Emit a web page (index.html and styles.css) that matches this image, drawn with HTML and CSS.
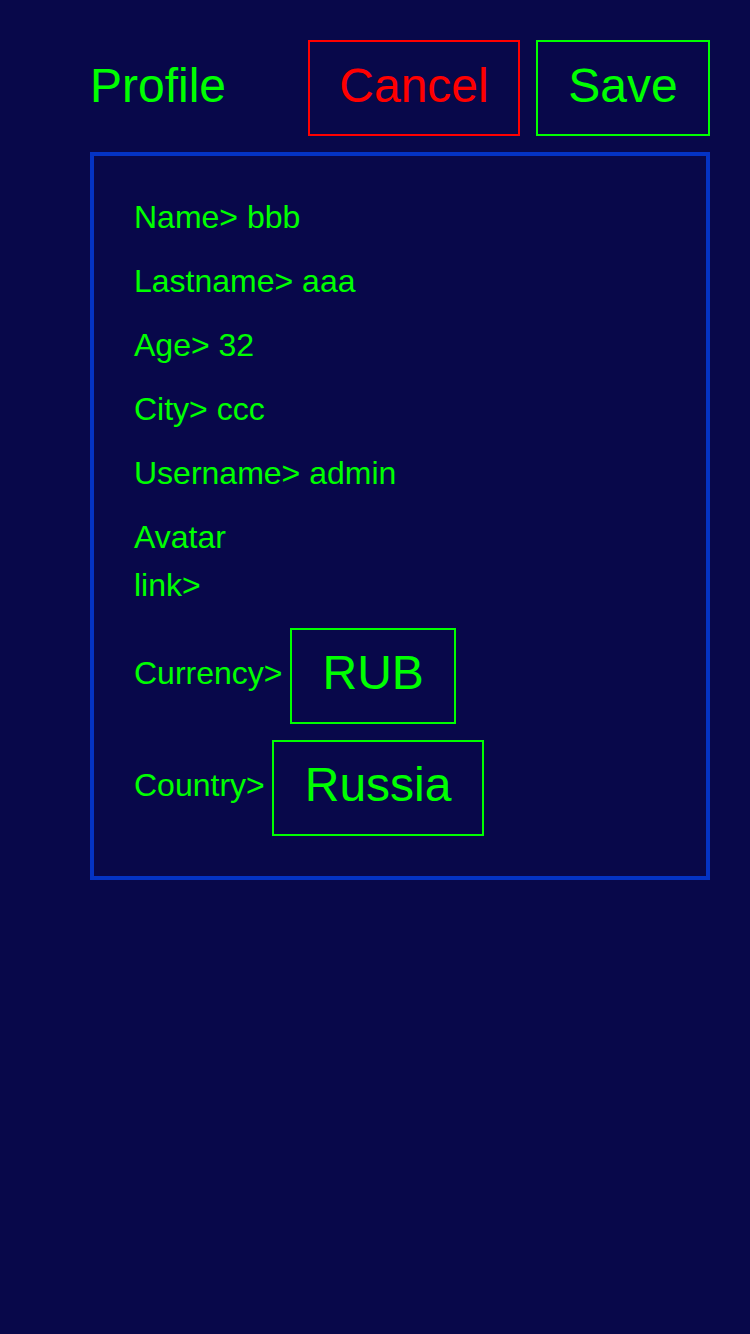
FILE: index.html
```html
<!DOCTYPE html>
<html>
<head>
<meta charset="utf-8">
<link rel="stylesheet" href="styles.css">
</head>
<body>
<div class="page">
  <header class="header">
    <div class="title">Profile</div>
    <div class="actions">
      <div class="btn btn-cancel">Cancel</div>
      <div class="btn btn-save">Save</div>
    </div>
  </header>
  <section class="card">
    <div class="row">Name&gt; bbb</div>
    <div class="row">Lastname&gt; aaa</div>
    <div class="row">Age&gt; 32</div>
    <div class="row">City&gt; ccc</div>
    <div class="row">Username&gt; admin</div>
    <div class="row row-avatar"><span class="avatar-label">Avatar link&gt;</span></div>
    <div class="row row-select">
      <span class="select-label">Currency&gt;</span>
      <div class="select-box">RUB</div>
    </div>
    <div class="row row-select">
      <span class="select-label">Country&gt;</span>
      <div class="select-box">Russia</div>
    </div>
  </section>
</div>
</body>
</html>
```
FILE: styles.css
```css
html, body {
  margin: 0;
  padding: 0;
  background: #08084a;
  height: 100%;
}
body {
  font-family: "Liberation Sans", Arial, sans-serif;
  color: #00ff00;
}
.page {
  padding: 40px 40px 0 90px;
}
.header {
  display: flex;
  justify-content: space-between;
  align-items: baseline;
}
.title {
  font-size: 48px;
  line-height: 56px;
}
.actions {
  display: flex;
  gap: 16px;
  align-items: baseline;
}
.btn {
  box-sizing: border-box;
  height: 96px;
  padding: 16px 0 0;
  border: 2px solid #00ff00;
  font-size: 48px;
  line-height: 56px;
  text-align: center;
}
.btn-cancel {
  border-color: #ff0000;
  color: #ff0000;
  width: 212px;
}
.btn-save {
  width: 174px;
}
.card {
  margin-top: 16px;
  border: 4px solid #0433c4;
  padding: 37px 40px 40px;
  display: flex;
  flex-direction: column;
  gap: 16px;
}
.row {
  font-size: 32px;
  line-height: 48px;
}
.row-avatar {
  margin-bottom: 3px;
}
.avatar-label {
  display: block;
  max-width: 110px;
}
.row-select {
  display: flex;
  align-items: center;
  gap: 7.5px;
}
.select-label {
  margin-bottom: 7px;
}
.select-box {
  box-sizing: border-box;
  height: 96px;
  border: 2px solid #00ff00;
  padding: 15px 30.5px 0;
  font-size: 48px;
  line-height: 56px;
}
```
